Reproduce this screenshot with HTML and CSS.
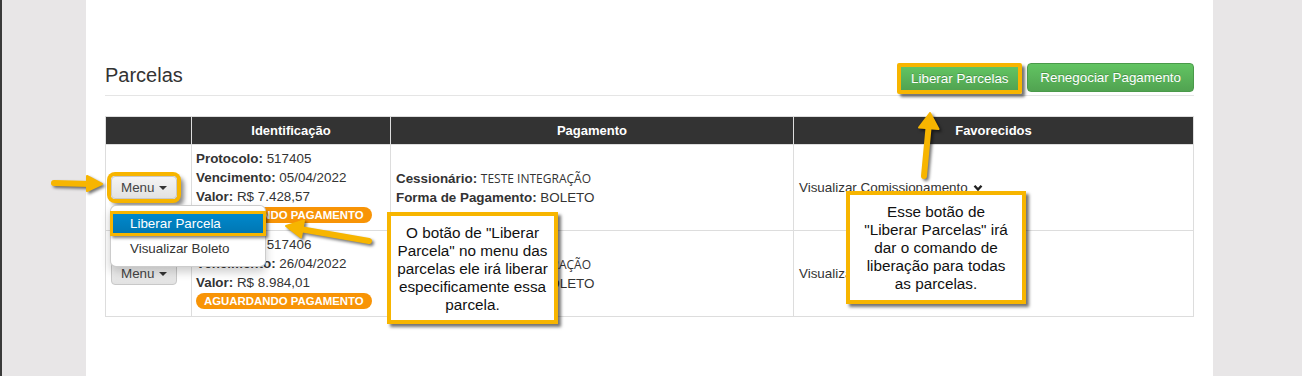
FILE: index.html
```html
<!DOCTYPE html>
<html lang="pt-BR">
<head>
  <meta charset="UTF-8" />
  <title>Parcelas</title>
  <link rel="stylesheet" href="styles.css">
</head>
<body>
  <div class="page">
    <aside class="side side-left"></aside>

    <main class="content">
      <div class="page-header">
        <h2>Parcelas</h2>
        <div class="actions">
          <button class="btn btn-success btn-marked">Liberar Parcelas</button>
          <button class="btn btn-success">Renegociar Pagamento</button>
        </div>
      </div>

      <table class="parcelas">
        <thead>
          <tr>
            <th class="col-menu"></th>
            <th class="col-id">Identificação</th>
            <th class="col-pag">Pagamento</th>
            <th>Favorecidos</th>
          </tr>
        </thead>
        <tbody>
          <tr>
            <td class="menu-cell">
              <div class="btn-group">
                <button class="btn btn-menu menu-marked">Menu <span class="caret"></span></button>
                <ul class="dropdown">
                  <li class="active">Liberar Parcela</li>
                  <li>Visualizar Boleto</li>
                </ul>
              </div>
            </td>
            <td class="ident">
              <div><b>Protocolo:</b> 517405</div>
              <div><b>Vencimento:</b> 05/04/2022</div>
              <div><b>Valor:</b> R$ 7.428,57</div>
              <div class="status"><span class="badge">Aguardando Pagamento</span></div>
            </td>
            <td class="pag">
              <div><b>Cessionário:</b> <span class="alt">TESTE INTEGRAÇÃO</span></div>
              <div><b>Forma de Pagamento:</b> BOLETO</div>
            </td>
            <td class="fav">
              Visualizar Comissionamento
              <svg class="chev" width="10" height="8" viewBox="0 0 10 8"><path d="M1.5 1.8 L5 5.6 L8.5 1.8" fill="none" stroke="#222" stroke-width="2.4"/></svg>
            </td>
          </tr>
          <tr>
            <td class="menu-cell">
              <div class="btn-group">
                <button class="btn btn-menu">Menu <span class="caret"></span></button>
              </div>
            </td>
            <td class="ident">
              <div><b>Protocolo:</b> 517406</div>
              <div><b>Vencimento:</b> 26/04/2022</div>
              <div><b>Valor:</b> R$ 8.984,01</div>
              <div class="status"><span class="badge">Aguardando Pagamento</span></div>
            </td>
            <td class="pag">
              <div><b>Cessionário:</b> <span class="alt">TESTE INTEGRAÇÃO</span></div>
              <div><b>Forma de Pagamento:</b> BOLETO</div>
            </td>
            <td class="fav">
              Visualizar Comissionamento
              <svg class="chev" width="10" height="8" viewBox="0 0 10 8"><path d="M1.5 1.8 L5 5.6 L8.5 1.8" fill="none" stroke="#222" stroke-width="2.4"/></svg>
            </td>
          </tr>
        </tbody>
      </table>
    </main>

    <aside class="side side-right"></aside>

    <!-- annotations -->
    <svg class="arrows" width="1302" height="376" viewBox="0 0 1302 376">
      <g fill="#f7b500" stroke="#f7b500" stroke-linecap="round" stroke-linejoin="round">
        <line x1="54" y1="183" x2="90" y2="184" stroke-width="6"/>
        <polygon points="87,176 102,184 87,191" stroke-width="2"/>

        <line x1="369" y1="241" x2="300" y2="229" stroke-width="6"/>
        <polygon points="304,220.5 286,226 301,237.5" stroke-width="2"/>

        <line x1="924" y1="176" x2="928.6" y2="127" stroke-width="6"/>
        <polygon points="919,127.5 930,113 938.5,129" stroke-width="2"/>
      </g>
    </svg>

    <div class="callout callout-menu">
      O botão de "Liberar<br>
      Parcela" no menu das<br>
      parcelas ele irá liberar<br>
      especificamente essa<br>
      parcela.
    </div>

    <div class="callout callout-top">
      Esse botão de<br>
      "Liberar Parcelas" irá<br>
      dar o comando de<br>
      liberação para todas<br>
      as parcelas.
    </div>
  </div>
</body>
</html>
```

FILE: styles.css
```css
* {
  box-sizing: border-box;
}

body {
  margin: 0;
  font-family: 'Liberation Sans', Arial, sans-serif;
  font-size: 13px;
  color: #333;
  background: #e8e6e7;
}

.page {
  position: relative;
  display: flex;
  height: 376px;
  overflow: hidden;
}

.side {
  background: #e8e6e7;
}

.side-left {
  width: 86px;
  border-left: 2px solid #3a3a3a;
}

.side-right {
  width: 89px;
}

.content {
  width: 1127px;
  background: #fff;
  padding: 63px 19px 0;
}

/* header */

.page-header {
  display: flex;
  justify-content: space-between;
  align-items: flex-start;
  padding-bottom: 1px;
  border-bottom: 1px solid #e5e5e5;
}

.page-header h2 {
  margin: 0;
  font-size: 20px;
  font-weight: normal;
  line-height: 24px;
  color: #333;
}

.actions {
  display: flex;
  align-items: flex-start;
  gap: 5px;
}

.btn {
  font-family: inherit;
  font-size: 13.4px;
  border-radius: 4px;
  cursor: pointer;
}

.btn-success {
  height: 29px;
  padding: 0 12px;
  color: #fff;
  background: linear-gradient(#62c462, #51a351);
  border: 1px solid #4a9a4a;
  text-shadow: 0 -1px 0 rgba(0, 0, 0, 0.2);
}

.btn-marked {
  width: 125px;
  height: 31px;
  padding: 0;
  border: 4px solid #f7b500;
  border-radius: 2px;
  box-shadow: 3px 3px 3px rgba(0, 0, 0, 0.55);
}

/* table */

.parcelas {
  width: 100%;
  margin-top: 20px;
  border-collapse: collapse;
  table-layout: fixed;
  border: 1px solid #ddd;
}

.parcelas th {
  height: 28px;
  padding: 0 5px;
  background: #333;
  color: #fff;
  font-size: 13px;
  font-weight: bold;
  text-align: center;
  border: 1px solid #ddd;
  border-bottom: 0;
}

.col-menu {
  width: 86px;
}

.col-id {
  width: 199px;
}

.col-pag {
  width: 403px;
}

.parcelas td {
  height: 86px;
  padding: 4px 4px 4px 5px;
  font-size: 13.4px;
  line-height: 19px;
  border: 1px solid #ddd;
  vertical-align: middle;
}

.parcelas td.ident {
  padding-left: 4px;
  vertical-align: top;
}

.alt {
  font-family: 'Open Sans', sans-serif;
  font-size: 12px;
}

.status {
  margin-top: 1px;
  line-height: 16px;
}

.badge {
  display: inline-block;
  padding: 0 8px;
  font-size: 11.4px;
  font-weight: bold;
  line-height: 16px;
  color: #fff;
  text-transform: uppercase;
  background: #f89406;
  border-radius: 9px;
}

.chev {
  margin-left: 2px;
  vertical-align: 0;
}

/* menu */

.btn-group {
  position: relative;
  display: inline-block;
}

.btn-menu {
  height: 23px;
  padding: 0 9px;
  font-size: 13.4px;
  color: #444;
  line-height: 21px;
  background: linear-gradient(#f4f4f4, #e2e2e2);
  border: 1px solid #c8c8c8;
}

.caret {
  display: inline-block;
  width: 0;
  height: 0;
  margin-left: 1px;
  vertical-align: middle;
  border-top: 4px solid #333;
  border-left: 4px solid transparent;
  border-right: 4px solid transparent;
}

.menu-marked {
  box-shadow: 0 0 0 4px #f7b500, 4px 4px 4px 3px rgba(0, 0, 0, 0.45);
}

.dropdown {
  position: absolute;
  top: calc(100% + 6px);
  left: -1px;
  z-index: 5;
  width: 156px;
  margin: 0;
  padding: 5px 0;
  list-style: none;
  background: #fff;
  border: 1px solid rgba(0, 0, 0, 0.2);
  border-radius: 6px;
  box-shadow: 0 5px 10px rgba(0, 0, 0, 0.2);
}

.dropdown li {
  padding: 3px 19px;
  line-height: 19px;
  font-size: 13.4px;
  color: #333;
  white-space: nowrap;
}

.dropdown li.active {
  margin: 0 -1px;
  padding: 0 17px;
  color: #fff;
  background: linear-gradient(#0088cc, #0077b3);
  border: 3px solid #f7b500;
  box-shadow: 2px 2px 3px rgba(0, 0, 0, 0.5);
}

/* annotations */

.arrows {
  position: absolute;
  top: 0;
  left: 0;
  z-index: 8;
  pointer-events: none;
  filter: drop-shadow(2px 2px 1.5px rgba(0, 0, 0, 0.55));
}

.callout {
  position: absolute;
  z-index: 9;
  font-size: 15.3px;
  line-height: 18px;
  text-align: center;
  color: #111;
  background: #fff;
  border: 4px solid #f7b500;
  box-shadow: 3px 3px 3px rgba(0, 0, 0, 0.55);
}

.callout-menu {
  left: 387px;
  top: 212px;
  width: 171px;
  height: 112px;
  padding: 8px 2px 0;
}

.callout-top {
  left: 846px;
  top: 191px;
  width: 180px;
  height: 113px;
  padding: 8px 2px 0;
}
```
